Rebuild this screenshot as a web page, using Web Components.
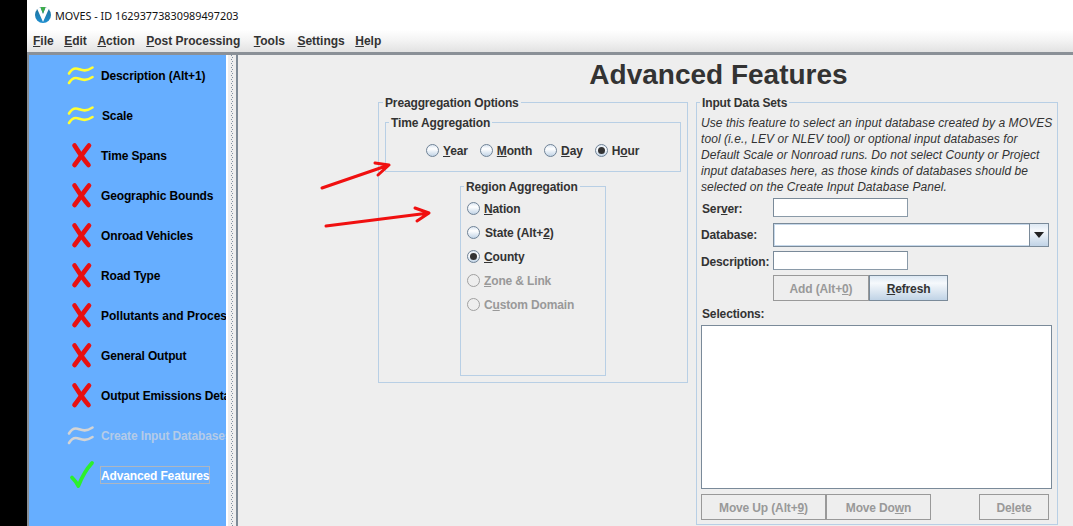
<!DOCTYPE html>
<html lang="en">
<head>
<meta charset="utf-8">
<title>MOVES</title>
<style>
html,body{margin:0;padding:0;width:1073px;height:526px;overflow:hidden;background:#000}
body{font:bold 12px "Liberation Sans",Arial,sans-serif;color:#333;letter-spacing:-.14px}
</style>
</head>
<body>
<moves-app></moves-app>

<script>
function el(tag, html, css){
  customElements.define(tag, class extends HTMLElement{
    constructor(){
      super();
      const r=this.attachShadow({mode:'open'});
      r.innerHTML='<style>'+css+'</style>'+(typeof html==='function'?html(this):html);
    }
  });
}
const WAVES=c=>`<svg width="30" height="30" viewBox="0 0 30 30" fill="none" stroke="${c}" stroke-width="2.6" stroke-linecap="round"><path d="M3 13.500C5 10 8 7.800 11.500 8.700S19 12.500 26.500 7.500"/><path d="M3 23C5 19.500 8 17.300 11.500 18.200S19 22 26.500 17"/></svg>`;
const CROSS=`<svg width="30" height="30" viewBox="0 0 30 30" fill="none" stroke="#e81010" stroke-width="4.600" stroke-linecap="round"><path d="M8.500 5.500C12 11 17 19 22.500 25"/><path d="M23 5.500C18.500 11 13 19 8.500 25"/></svg>`;
const CHECK=`<svg width="30" height="30" viewBox="0 0 30 30" fill="none" stroke="#2cf02c" stroke-width="3.800" stroke-linecap="round" stroke-linejoin="round"><path d="M6 17.500C8 19.500 10.500 22 12.300 26C15.500 18 20 9.500 26 3"/></svg>`;

el('x-titlebar',`<svg width="18" height="18" viewBox="0 0 18 18"><defs><linearGradient id="g" x1="0" y1="0" x2="0" y2="1"><stop offset="0" stop-color="#1f6f96"/><stop offset="1" stop-color="#1f8fd0"/></linearGradient></defs><circle cx="9" cy="9" r="8" fill="url(#g)"/><path d="M3 2.500 9 16 15 2.500 11.500 1.500 9 8 6.500 1.500Z" fill="#fff"/><path d="M6.500 1.300C8 .8 10 .8 11.500 1.300L9 7.500Z" fill="#3fae49"/></svg><span><slot></slot></span>`,
`:host{display:flex;align-items:center;height:30px;background:#fff;padding-left:7px;gap:3px;font:10.800px "Noto Sans",sans-serif;color:#111;letter-spacing:0}
 span{white-space:nowrap}`);

el('x-menubar',`<slot></slot>`,
`:host{display:flex;align-items:center;height:22px;padding-left:6px;background:linear-gradient(#fff,#f4f4f4 45%,#e2e2e2);border-bottom:3px solid #8a9097;color:#333;letter-spacing:0}
 ::slotted(span:nth-child(1)){margin-right:10.500px}
 ::slotted(span:nth-child(2)){margin-right:10.500px}
 ::slotted(span:nth-child(3)){margin-right:11.500px}
 ::slotted(span:nth-child(4)){margin-right:13.500px}
 ::slotted(span:nth-child(5)){margin-right:12.500px}
 ::slotted(span:nth-child(6)){margin-right:10.500px}`);

el('x-splitter',``,
`:host{display:block;flex:none;width:8px;margin-left:2px;background:
 linear-gradient(#7f8fa0 1px,transparent 1px) 3px 0/1px 4px repeat-y,
 linear-gradient(#7f8fa0 1px,transparent 1px) 4px 2px/1px 4px repeat-y,#eee;
 box-shadow:-2px 0 0 #fff}`);

el('x-sidebar',`<slot></slot>`,
`:host{display:block;flex:none;width:197px;background:#66aeff;border-left:2px solid #8a8f94;overflow:hidden}`);

el('x-nav-item',h=>{
  const i=h.getAttribute('icon');
  const svg=i==='wave'?WAVES('#ffff33'):i==='wave-off'?WAVES('#d4d4d4'):i==='check'?CHECK:CROSS;
  return `<span class="ic">${svg}</span><span class="t"><slot></slot></span>`;
},
`:host{display:flex;align-items:center;height:40px;padding-left:37px;gap:4px;white-space:nowrap;color:#000}
 .ic{flex:none;width:30px;height:30px;display:block}
 svg{display:block}
 .t{border:1px solid transparent;padding:2px 0 0;line-height:14px}
 :host([off]){color:#b4cbe8}
 :host([current]){color:#fff}
 :host([current]) .t{border-color:#adb6c2}`);

el('x-titled',h=>`<fieldset><legend>${h.getAttribute('label')}</legend><div class="b"><slot></slot></div></fieldset>`,
`:host{display:block;box-sizing:border-box}
 fieldset{box-sizing:border-box;margin:0;padding:0;min-width:0;height:100%;border:1px solid #b8cfe5}
 legend{margin-left:var(--lg,4px);padding:0 2px;height:14px;line-height:16px;color:#333}`);

el('x-radio',h=>`<i></i><span><slot></slot></span>`,
`:host{display:flex;align-items:center;gap:4px;height:16px;white-space:nowrap;color:#333}
 span{margin-top:2px}
 i{box-sizing:border-box;flex:none;width:13px;height:13px;border-radius:50%;border:1px solid #6f8296;background:linear-gradient(#dbe6f1,#fff 35%,#c2d4e6);position:relative}
 :host([checked]) i::after{content:"";position:absolute;left:2px;top:2px;width:7px;height:7px;border-radius:50%;background:#333}
 :host([disabled]){color:#999}
 :host([disabled]) i{background:#eee;border-color:#a0a0a0}`);

el('x-button',`<slot></slot>`,
`:host{box-sizing:border-box;display:flex;align-items:center;justify-content:center;flex:none;height:26px;padding-top:2px;border:1px solid #7a8a99;color:#333;background:linear-gradient(#dde8f3,#f6f9fc 30%,#c0d3e6);white-space:nowrap}
 :host([disabled]){color:#999;background:#eee;border-color:#999}`);

el('x-input',``,
`:host{box-sizing:border-box;display:block;flex:none;width:135px;height:19px;background:#fff;border:1px solid #8a9aa8;border-top-color:#7a8a99;border-left-color:#7a8a99}`);

el('x-combo',`<div class="f"></div><div class="b"><svg width="10" height="6" viewBox="0 0 10 6"><path d="M0 0H10L5 6Z" fill="#222"/></svg></div>`,
`:host{box-sizing:border-box;display:flex;flex:none;width:276px;height:24px;border:1px solid #7a8a99;background:#fff}
 .f{flex:1;border-left:1px solid #c6d8ea;border-top:1px solid #c6d8ea;border-bottom:1px solid #c6d8ea}
 .b{width:19px;box-sizing:border-box;border-left:1px solid #7a8a99;display:flex;align-items:center;justify-content:center;background:linear-gradient(#dde8f3,#f6f9fc 30%,#c0d3e6)}`);

el('x-form-row',h=>`<label><slot name="l"></slot></label><slot></slot>`,
`:host{display:flex;align-items:center;margin-top:var(--mt,0)}
 label{flex:none;width:72px;white-space:nowrap;color:#333}`);

el('x-list',``,
`:host{box-sizing:border-box;display:block;width:351px;height:164px;background:#fff;border:1px solid #7a8a99}`);

el('x-preagg',`
<x-titled label="Preaggregation Options" style="width:310px;height:288px">
  <x-titled label="Time Aggregation" style="--lg:3px;width:296px;height:57px;margin:6px 0 0 6px">
    <div style="display:flex;gap:12px;padding:13px 0 0 40px">
      <x-radio><u>Y</u>ear</x-radio>
      <x-radio><u>M</u>onth</x-radio>
      <x-radio><u>D</u>ay</x-radio>
      <x-radio checked>H<u>o</u>ur</x-radio>
    </div>
  </x-titled>
  <x-titled label="Region Aggregation" style="--lg:3px;width:146px;height:197px;margin:7px 0 0 81px">
    <div style="display:grid;grid-auto-rows:24px;align-items:center;padding:3px 0 0 6px">
      <x-radio><u>N</u>ation</x-radio>
      <x-radio><span style="margin-left:1px">State (Alt+<u>2</u>)</span></x-radio>
      <x-radio checked><u>C</u>ounty</x-radio>
      <x-radio disabled><u>Z</u>one &amp; Link</x-radio>
      <x-radio disabled>C<u>u</u>stom Domain</x-radio>
    </div>
  </x-titled>
</x-titled>`,
`:host{display:block;flex:none}`);

el('x-inputsets',`
<x-titled label="Input Data Sets" style="--lg:3px;width:362px;height:430px">
  <div class="pad">
    <div class="note">Use this feature to select an input database created by a MOVES<br>tool (i.e., LEV or NLEV tool) or optional input databases for<br>Default Scale or Nonroad runs. Do not select County or Project<br>input databases here, as those kinds of databases should be<br>selected on the Create Input Database Panel.</div>
    <x-form-row style="--mt:3px"><span slot="l" class="dn" style="margin-left:1px">Ser<u>v</u>er:</span><x-input></x-input></x-form-row>
    <x-form-row style="--mt:6px"><span slot="l">Database:</span><x-combo></x-combo></x-form-row>
    <x-form-row style="--mt:4px"><span slot="l" class="dn">Description:</span><x-input></x-input></x-form-row>
    <div class="btns" style="margin:5px 0 0 72px">
      <x-button disabled style="width:96px">Add (Alt+<u>0</u>)</x-button>
      <x-button style="width:79px"><span><u>R</u>efresh</span></x-button>
    </div>
    <div class="lab">Selections:</div>
    <x-list></x-list>
    <div class="btns" style="margin-top:5px">
      <x-button disabled style="width:125px">Move Up (Alt+<u>9</u>)</x-button>
      <x-button disabled style="width:105px">Move Do<u>w</u>n</x-button>
      <x-button disabled style="width:70px;margin-left:48px">De<u>l</u>ete</x-button>
    </div>
  </div>
</x-titled>`,
`:host{display:block;flex:none}
 .pad{padding:6px 0 0 4px}
 .note{font:italic 12px/16px "Liberation Sans",Arial,sans-serif;letter-spacing:.07px;color:#333;white-space:nowrap}
 .dn{display:inline-block;padding-top:2px}
 .btns{display:flex}
 .lab{margin:5px 0 5px 1px;height:14px;line-height:16px;color:#333}`);

el('x-content',`
<h1>Advanced Features</h1>
<div class="cols"><x-preagg></x-preagg><x-inputsets></x-inputsets></div>`,
`:host{display:block;flex:1;min-width:0;background:#eee;border-left:2px solid #7f8b97;overflow:hidden}
 h1{margin:0;height:40px;font:bold 28px/40px "Liberation Sans",Arial,sans-serif;letter-spacing:0;color:#333;text-align:center;padding-left:126px}
 .cols{display:flex;gap:8px;padding-left:140px}`);

el('moves-app',`
<div class="edge"></div>
<div class="main">
  <x-titlebar>MOVES - ID 16293773830989497203</x-titlebar>
  <x-menubar>
    <span><u>F</u>ile</span><span><u>E</u>dit</span><span><u>A</u>ction</span><span><u>P</u>ost Processing</span><span><u>T</u>ools</span><span><u>S</u>ettings</span><span><u>H</u>elp</span>
  </x-menubar>
  <div class="work">
    <x-sidebar>
      <x-nav-item icon="wave">Description (Alt+1)</x-nav-item>
      <x-nav-item icon="wave"><span style="margin-left:1px">Scale</span></x-nav-item>
      <x-nav-item icon="x">Time Spans</x-nav-item>
      <x-nav-item icon="x">Geographic Bounds</x-nav-item>
      <x-nav-item icon="x">Onroad Vehicles</x-nav-item>
      <x-nav-item icon="x">Road Type</x-nav-item>
      <x-nav-item icon="x"><span style="letter-spacing:0">Pollutants and Processes</span></x-nav-item>
      <x-nav-item icon="x">General Output</x-nav-item>
      <x-nav-item icon="x">Output Emissions Detail</x-nav-item>
      <x-nav-item icon="wave-off" off>Create Input Databases</x-nav-item>
      <x-nav-item icon="check" current>Advanced Features</x-nav-item>
    </x-sidebar>
    <x-splitter></x-splitter>
    <x-content></x-content>
  </div>
</div>
<svg class="arrows" width="1073" height="526" viewBox="0 0 1073 526" fill="none" stroke="#f01010" stroke-width="3" stroke-linecap="round" stroke-linejoin="round">
  <path d="M322 188 389 165M375 163 389 165 378 175"/>
  <path d="M326 226 429 213M415 208 429 213 417 221"/>
</svg>`,
`:host{display:flex;width:1073px;height:526px;position:relative;overflow:hidden;background:#000}
 .edge{flex:none;width:27px;background:#000}
 .main{flex:1;min-width:0;display:flex;flex-direction:column;background:#eee}
 .work{flex:1;min-height:0;display:flex}
 .arrows{position:absolute;left:0;top:0;pointer-events:none}`);
</script>
</body>
</html>
